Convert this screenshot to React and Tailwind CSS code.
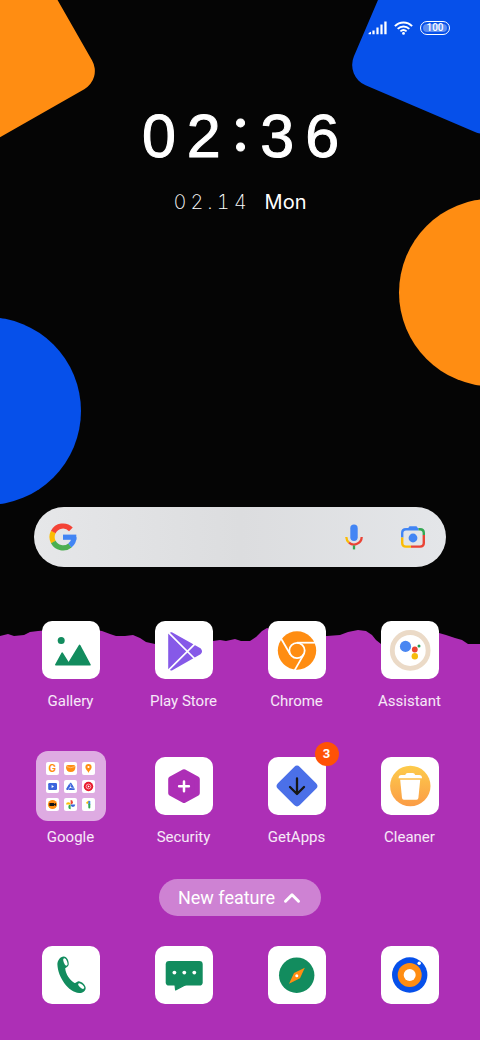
import { ChevronUp } from 'lucide-react';

const GREEN = '#128c5e';
const ORANGE = '#ff8d12';
const BLUE = '#0650ea';
const PURPLE = '#ad2fb6';

function Wallpaper() {
  return (
    <svg
      className="absolute inset-0 h-full w-full"
      viewBox="0 0 480 1040"
      preserveAspectRatio="xMidYMid slice"
      aria-hidden="true"
    >
      <rect
        x="-170" y="-170" width="170" height="170" rx="21" fill={ORANGE}
        transform="translate(102.5 78.8) rotate(-29.7)"
      />
      <rect
        x="0" y="-163" width="163" height="163" rx="22" fill={BLUE}
        transform="translate(345.3 76.6) rotate(23.1)"
      />
      <circle cx="493" cy="292.5" r="94" fill={ORANGE} />
      <circle cx="-13" cy="411" r="94" fill={BLUE} />
      <path
        fill={PURPLE}
        d="M0 636 L8 634 L14 636 L24 635 L30 632 L38 631 L50 630 L70 628 L90 629 L102 631 L110 634 L116 636
           L125 636 L133 635 L140 638 L146 642 L155 644 L185 646 L213 641 L220 640 L226 641 L235 639 L241 641
           L250 641 L256 637 L262 631 L267 628 L290 634 L327 636 L340 635 L348 632 L358 630 L366 631 L372 635
           L376 640 L381 644 L410 638 L439 633 L446 635 L455 638 L462 640 L468 644 L480 644 V1040 H0 Z"
      />
    </svg>
  );
}

function SignalIcon() {
  return (
    <svg className="h-3.5 w-[19px]" viewBox="0 0 19 14" fill="#fff" aria-hidden="true">
      <path d="M0.6 13.2 V12 L3 10.8 V13.2 Z M4.4 9.6 H6.6 V13.2 H4.4 Z M8.4 6.6 H10.6 V13.2 H8.4 Z M12.4 3.6 H14.6 V13.2 H12.4 Z M16.3 0.4 H18.6 V13.2 H16.3 Z" />
    </svg>
  );
}

function WifiIcon() {
  return (
    <svg className="h-3.5 w-[19px]" viewBox="0 0 19 14" fill="none" stroke="#fff" strokeWidth="1.9" aria-hidden="true">
      <path d="M0.9 5.2 C5.6 0.3 13.4 0.3 18.1 5.2" />
      <path d="M3.7 7.9 C7 4.7 12 4.7 15.3 7.9" />
      <path d="M6.4 10.4 C8.2 8.8 10.8 8.8 12.6 10.4" />
      <circle cx="9.5" cy="12.4" r="1.4" fill="#fff" stroke="none" />
    </svg>
  );
}

function Battery({ level }) {
  return (
    <div className="flex h-3.5 w-[30px] rounded-full border border-white p-0.5">
      <span className="flex flex-1 items-center justify-center rounded-full bg-white/35 font-[Roboto] text-[10px] leading-none font-medium text-white">
        {level}
      </span>
    </div>
  );
}

function GoogleLogo() {
  return (
    <svg className="h-7 w-7" viewBox="0 0 28 28" fill="none" strokeWidth="5.2" aria-hidden="true">
      <path stroke="#fbbc05" d="M4.4 19.2 A11 11 0 0 1 4.4 8.8" />
      <path stroke="#f44336" d="M4.3 9 A11 11 0 0 1 21.9 6.3" />
      <path stroke="#4caf50" d="M4.3 19 A11 11 0 0 0 21 22.4" />
      <path stroke="#4285f4" d="M20.9 22.5 A11 11 0 0 0 25 14.2" />
      <path fill="#4285f4" stroke="none" d="M14 11.6 H27.3 V16.8 H14 Z" />
    </svg>
  );
}

function MicIcon() {
  return (
    <svg className="h-[26px] w-[18px]" viewBox="0 0 18 26" fill="none" strokeWidth="2.3" aria-hidden="true">
      <rect x="5.3" y="0.5" width="7.4" height="16.5" rx="3.7" fill="#4285f4" />
      <path stroke="#fbbc05" d="M1.3 13 A7.7 7.7 0 0 0 4 18.6" />
      <path stroke="#ea4335" d="M4 18.6 A7.7 7.7 0 0 0 16.7 13" />
      <path stroke="#34a853" d="M9 21.4 V25.4" />
    </svg>
  );
}

function LensIcon() {
  return (
    <svg className="h-[26px] w-[26px]" viewBox="0 0 26 26" fill="none" strokeWidth="2.4" aria-hidden="true">
      <path fill="#4285f4" d="M7.5 5 L9.5 2.2 H16.5 L18.5 5 Z" />
      <path stroke="#4285f4" d="M2.2 13.5 V9 Q2.2 5.2 6 5.2 H18.5" />
      <path stroke="#34a853" d="M18.5 5.2 H20 Q23.8 5.2 23.8 9 V11" />
      <path stroke="#ea4335" d="M23.8 11 V19 Q23.8 22.6 20 22.6 H11" />
      <path stroke="#fbbc05" d="M11 22.6 H6 Q2.2 22.6 2.2 19 V13.5" />
      <circle cx="13" cy="14" r="4.4" fill="#4285f4" />
    </svg>
  );
}

function Art({ children }) {
  return (
    <svg className="h-full w-full" viewBox="0 0 58 58" aria-hidden="true">
      {children}
    </svg>
  );
}

const galleryArt = (
  <Art>
    <circle cx="19.2" cy="19.6" r="3.5" fill={GREEN} />
    <path
      fill={GREEN} stroke={GREEN} strokeWidth="1.6" strokeLinejoin="round"
      d="M13.8 43.8 L20.2 32.2 L26.6 42.4 L37.6 24.4 L48 43.8 Z"
    />
  </Art>
);

const playArt = (
  <Art>
    <path
      fill="#8659e8" stroke="#8659e8" strokeWidth="2" strokeLinejoin="round"
      d="M14.2 13.1 L16.4 12.2 L45 28.1 Q47 30.3 45 32.4 L16.4 48.6 L14.2 47.6 Z"
    />
    <path fill="none" stroke="#fff" strokeWidth="1.7" d="M12 10.2 L43 41 M12 50.6 L43 19.8" />
  </Art>
);

const chromeArt = (
  <Art>
    <circle cx="29" cy="29.5" r="19.2" fill={ORANGE} />
    <circle cx="29" cy="29.5" r="7.7" fill={ORANGE} stroke="#fff" strokeWidth="1.8" />
    <path stroke="#fff" strokeWidth="1.8" d="M29 21.7 H50" />
    <path stroke="#fff" strokeWidth="1.8" d="M29 21.7 H50" transform="rotate(120 29 29.5)" />
    <path stroke="#fff" strokeWidth="1.8" d="M29 21.7 H50" transform="rotate(240 29 29.5)" />
  </Art>
);

const assistantArt = (
  <Art>
    <circle cx="29.2" cy="29.4" r="17.9" fill="none" stroke="#ebdac7" strokeWidth="4.8" />
    <circle cx="24.5" cy="25.4" r="5.6" fill="#4a87f2" />
    <circle cx="33.8" cy="28.5" r="2.9" fill="#ea4335" />
    <circle cx="38" cy="25" r="1.5" fill="#1f9d55" />
    <circle cx="33.8" cy="35.3" r="3.2" fill="#f6bb0c" />
  </Art>
);

const securityArt = (
  <Art>
    <path
      fill={PURPLE} stroke={PURPLE} strokeWidth="5" strokeLinejoin="round"
      d="M29 14.7 L42.3 22 V36.3 L29 43.6 L15.7 36.3 V22 Z"
    />
    <path stroke="#fff" strokeWidth="2.5" strokeLinecap="round" d="M29 24.4 V34.2 M24.1 29.3 H33.9" />
  </Art>
);

const getAppsArt = (
  <Art>
    <rect x="13.5" y="13.5" width="31" height="31" rx="4" fill="#4b70e8" transform="rotate(45 29 29)" />
    <path
      fill="none" stroke="#161616" strokeWidth="2.3" strokeLinecap="round" strokeLinejoin="round"
      d="M29 21.5 V37 M22 30 L29 37 L36 30"
    />
  </Art>
);

const cleanerArt = (
  <Art>
    <defs>
      <linearGradient id="cleaner" x1="0" y1="0" x2="0" y2="1">
        <stop offset="0" stopColor="#fdcb4b" />
        <stop offset="1" stopColor="#fb9c46" />
      </linearGradient>
    </defs>
    <circle cx="29.3" cy="29" r="20.2" fill="url(#cleaner)" />
    <path
      fill="#fff"
      d="M17.6 21.3 Q17.6 18 20.4 18 H24.2 Q24.8 15.9 26.6 15.9 H31.8 Q33.6 15.9 34.2 18 H38.2 Q41 18 41 21.3 Z"
    />
    <path fill="#fff" d="M19.2 22.8 H39.2 L37.4 41 Q37.2 42.8 35.6 42.8 H22.8 Q21.2 42.8 21 41 Z" />
  </Art>
);

const phoneArt = (
  <Art>
    <path
      fill={GREEN}
      d="M15.4 18.5 C15.2 14.6 18 10.6 21.8 10.4 C25 10.4 27.2 15.2 26.7 18.6 C26.4 20.6 24.6 21.2 23.2 22.2
         C23.6 28 27.6 34 32.6 37 C34 37.4 34.4 35.6 36.4 35.3 C39.6 35.2 43.6 39 43.7 42 C43.4 45.4 40.4 47.2 37.2 47
         C26.4 46.4 15.8 31 15.4 18.5 Z"
    />
    <ellipse cx="23.4" cy="15.9" rx="1.7" ry="3.9" fill="#fff" transform="rotate(-20 23.4 15.9)" />
    <ellipse cx="39.2" cy="40.1" rx="1.7" ry="3.7" fill="#fff" transform="rotate(-47 39.2 40.1)" />
  </Art>
);

const messagesArt = (
  <Art>
    <rect x="10.7" y="15" width="37" height="24.6" rx="3.4" fill={GREEN} />
    <path
      fill={GREEN} stroke={GREEN} strokeWidth="1.2" strokeLinejoin="round"
      d="M20 38.5 L20.6 44 L31 38.5 Z"
    />
    <circle cx="19.4" cy="26.6" r="1.9" fill="#fff" />
    <circle cx="29.3" cy="26.6" r="1.9" fill="#fff" />
    <circle cx="39.3" cy="26.6" r="1.9" fill="#fff" />
  </Art>
);

const browserArt = (
  <Art>
    <circle cx="28.7" cy="29.2" r="17.7" fill={GREEN} />
    <path fill={ORANGE} d="M36.8 21.8 L32 32.2 L21 37.8 L26 27 Z" />
    <circle cx="28.8" cy="29.7" r="1.5" fill="#fff" />
  </Art>
);

const cameraArt = (
  <Art>
    <circle cx="28.7" cy="29" r="17.7" fill={BLUE} />
    <circle cx="28.7" cy="29" r="12" fill={ORANGE} />
    <circle cx="28.7" cy="29" r="6" fill="#fff" />
    <circle cx="38.2" cy="17.3" r="1.7" fill="#fff" />
  </Art>
);

const folderIcons = [
  <span key="g" className="font-[Inter] text-[10px] leading-none font-bold text-[#ff8d12]">G</span>,
  <Mini key="game">
    <path fill={ORANGE} d="M2 4.8 Q2 3 4 3 H9.6 Q11.4 3 11.4 4.8 Q11.4 10 6.7 10 Q2 10 2 4.8 Z" />
    <path stroke="#ffc98c" strokeWidth="0.8" fill="none" d="M2.6 4.6 Q6.7 6.8 10.8 4.6" />
  </Mini>,
  <Mini key="maps">
    <path fill={ORANGE} d="M6.5 11 C6 8.6 3.4 7.8 3.4 5 A3.1 3.1 0 0 1 9.6 5 C9.6 7.8 7 8.6 6.5 11 Z" />
    <circle cx="6.5" cy="5" r="1.1" fill="#fff" />
  </Mini>,
  <Mini key="video">
    <rect x="2.2" y="3" width="8.8" height="7" rx="1.2" fill="#3b64dc" />
    <path fill="#fff" d="M5.6 5 L8 6.5 L5.6 8 Z" />
  </Mini>,
  <Mini key="drive">
    <path fill="none" stroke="#3b64dc" strokeWidth="2.2" strokeLinejoin="round" d="M6.5 3.8 L9.7 9 H3.3 Z" />
    <path stroke="#fff" strokeWidth="0.5" d="M5 2.6 L7 6 M11 8 H7.5 M4 10.6 L5.6 7.6" />
  </Mini>,
  <Mini key="music">
    <circle cx="6.5" cy="6.5" r="4.7" fill="#e8192c" />
    <circle cx="6.5" cy="6.5" r="2.4" fill="none" stroke="#fff" strokeWidth="0.6" />
    <path fill="#fff" d="M5.8 5.3 L7.8 6.5 L5.8 7.7 Z" />
  </Mini>,
  <Mini key="meet">
    <circle cx="6.5" cy="6.5" r="4.6" fill={ORANGE} />
    <path fill="#161616" d="M3.4 5 H8 V6 L10 5 V8 L8 7 V8 H3.4 Z" />
  </Mini>,
  <Mini key="photos">
    <path fill="#ea4335" d="M6.6 2 A2.3 2.3 0 0 1 6.6 6.6 Z" />
    <path fill="#3b64dc" d="M11.2 6.6 A2.3 2.3 0 0 1 6.6 6.6 Z" />
    <path fill="#34a853" d="M6.6 11.2 A2.3 2.3 0 0 1 6.6 6.6 Z" />
    <path fill="#fbbc05" d="M2 6.6 A2.3 2.3 0 0 1 6.6 6.6 Z" />
  </Mini>,
  <Mini key="one">
    <path stroke="#fbbc05" strokeWidth="2" strokeLinecap="round" d="M5.2 4.8 L7 3.6" />
    <path stroke="#4285f4" strokeWidth="2" d="M7.3 3 V6.6" />
    <path stroke="#34a853" strokeWidth="2" strokeLinecap="round" d="M7.3 6.6 V9.6" />
  </Mini>,
];

const apps = [
  { name: 'Gallery', art: galleryArt },
  { name: 'Play Store', art: playArt },
  { name: 'Chrome', art: chromeArt },
  { name: 'Assistant', art: assistantArt },
  { name: 'Google', folder: folderIcons },
  { name: 'Security', art: securityArt },
  { name: 'GetApps', art: getAppsArt, badge: 3 },
  { name: 'Cleaner', art: cleanerArt },
];

const dock = [
  { name: 'Phone', art: phoneArt },
  { name: 'Messages', art: messagesArt },
  { name: 'Browser', art: browserArt },
  { name: 'Camera', art: cameraArt },
];

function Mini({ children }) {
  return (
    <svg className="h-full w-full" viewBox="0 0 13 13" aria-hidden="true">
      {children}
    </svg>
  );
}

function Tile({ children }) {
  return <span className="block h-[58px] w-[58px] rounded-[10px] bg-white">{children}</span>;
}

function Folder({ icons }) {
  return (
    <span className="-m-1.5 grid h-[70px] w-[70px] grid-cols-3 place-content-center justify-items-center gap-[5px] rounded-xl bg-white/60 px-2.5">
      {icons.map((icon) => (
        <span key={icon.key} className="flex h-[13px] w-[13px] items-center justify-center rounded-xs bg-white">
          {icon}
        </span>
      ))}
    </span>
  );
}

function App({ app }) {
  return (
    <button type="button" className="flex flex-col items-center gap-3">
      <span className="relative">
        {app.folder ? <Folder icons={app.folder} /> : <Tile>{app.art}</Tile>}
        {app.badge && (
          <span className="absolute -top-[15px] -right-[13px] flex h-6 w-6 items-center justify-center rounded-full bg-[#ff5206] text-[13px] font-bold text-white">
            {app.badge}
          </span>
        )}
      </span>
      <span className="text-[15px] leading-5 text-white/90">{app.name}</span>
    </button>
  );
}

export default function HomeScreen() {
  return (
    <div className="relative flex min-h-screen flex-col overflow-hidden bg-[#050505] font-[Roboto,sans-serif] text-white">
      <Wallpaper />

      <header className="relative flex justify-end gap-[7px] pt-[21px] pr-[30px]">
        <SignalIcon />
        <WifiIcon />
        <Battery level={100} />
      </header>

      <section className="relative mt-[70px] flex flex-col items-center">
        <time className="pl-3 font-['Liberation_Sans',sans-serif] text-[61px] leading-[60px] tracking-[0.18em] [-webkit-text-stroke:1px_white]">
          02
          <span className="font-[Inter,sans-serif] [font-feature-settings:'case']">:</span>
          36
        </time>
        <div className="mt-6 flex items-center gap-3.5 font-[Inter,sans-serif] text-xl leading-6">
          <span className="font-extralight tracking-[0.2em] tabular-nums">02.14</span>
          <span>Mon</span>
        </div>
      </section>

      <div className="min-h-10 flex-1" />

      <main className="relative flex flex-col pb-9">
        <form
          className="mx-[34px] flex h-[60px] items-center rounded-full bg-linear-to-r from-[#e6e7e9] via-[#dcdddf] to-[#e4e6e9] pr-5 pl-[15px]"
          onSubmit={(e) => e.preventDefault()}
        >
          <GoogleLogo />
          <input type="search" aria-label="Search Google" className="mx-3 min-w-0 flex-1 bg-transparent text-gray-800 outline-none" />
          <button type="button" aria-label="Voice search" className="mr-[37px]">
            <MicIcon />
          </button>
          <button type="button" aria-label="Search by image">
            <LensIcon />
          </button>
        </form>

        <div className="mt-[54px] grid grid-cols-4 gap-y-[46px] px-3.5">
          {apps.map((app) => (
            <App key={app.name} app={app} />
          ))}
        </div>

        <button
          type="button"
          className="mt-8 flex h-[37px] items-center gap-1 self-center rounded-full bg-white/40 pr-4 pl-[19px] text-lg"
        >
          New feature
          <ChevronUp className="h-[26px] w-[26px]" strokeWidth={2.75} />
        </button>

        <nav aria-label="Dock" className="mt-[30px] grid grid-cols-4 justify-items-center px-3.5">
          {dock.map((app) => (
            <button key={app.name} type="button" aria-label={app.name}>
              <Tile>{app.art}</Tile>
            </button>
          ))}
        </nav>
      </main>
    </div>
  );
}
